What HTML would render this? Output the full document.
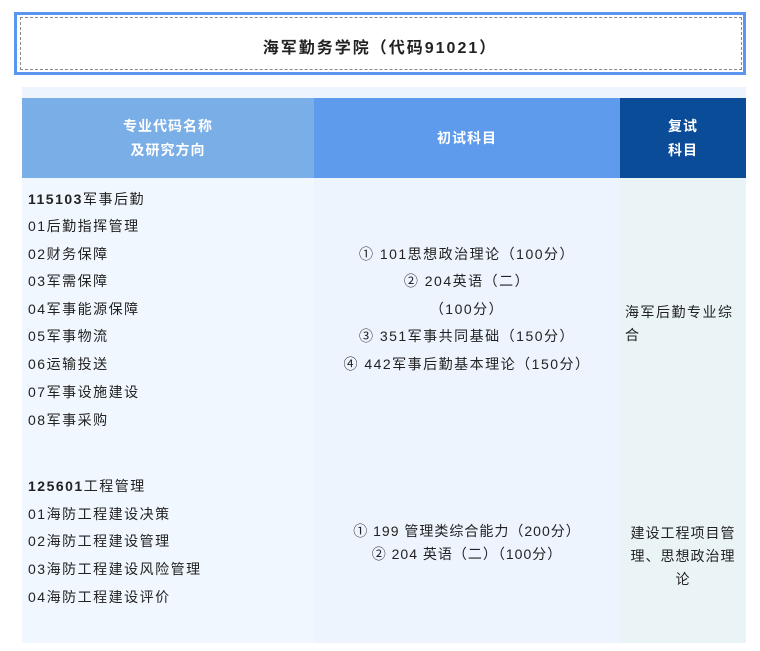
<!DOCTYPE html>
<html><head><meta charset="utf-8"><style>
body{margin:0;width:760px;height:651px;background:#fff;font-family:"Liberation Sans","Noto Sans CJK SC",sans-serif;position:relative;overflow:hidden}
.a{position:absolute}
.t{position:absolute;font-size:14px;letter-spacing:1.5px;color:#222;white-space:nowrap;line-height:18px}
.c{text-align:center}
.h{color:#fff;font-weight:bold;font-size:14px;letter-spacing:1px;text-align:center;line-height:24px}
</style></head><body>
<div class="a" style="left:14px;top:12px;width:726px;height:57px;border:3px solid #5b95ef"></div>
<div class="a" style="left:20px;top:17px;width:720px;height:51px;border:1px dashed #888"></div>
<div class="a" style="left:14px;top:34px;width:732px;text-align:center;font-size:16px;font-weight:bold;color:#222;letter-spacing:2px">海军勤务学院（代码91021）</div>
<div class="a" style="left:22px;top:87px;width:724px;height:11px;background:#edf4fd"></div>
<div class="a" style="left:22px;top:98px;width:292px;height:80px;background:#7aaee6"></div>
<div class="a" style="left:314px;top:98px;width:306px;height:80px;background:#5e9bed"></div>
<div class="a" style="left:620px;top:98px;width:126px;height:80px;background:#0b4c99"></div>
<div class="a" style="left:22px;top:178px;width:292px;height:465px;background:#f0f7fe"></div>
<div class="a" style="left:314px;top:178px;width:306px;height:465px;background:#edf4fd"></div>
<div class="a" style="left:620px;top:178px;width:126px;height:465px;background:#eaf4f6"></div>
<div class="a h" style="left:22px;top:114px;width:292px">专业代码名称<br>及研究方向</div>
<div class="a h" style="left:314px;top:126px;width:306px">初试科目</div>
<div class="a h" style="left:620px;top:114px;width:126px">复试<br>科目</div>

<div class="t" style="left:28px;top:190px"><b>115103</b>军事后勤</div>
<div class="t" style="left:28px;top:217px">01后勤指挥管理</div>
<div class="t" style="left:28px;top:245px">02财务保障</div>
<div class="t" style="left:28px;top:272px">03军需保障</div>
<div class="t" style="left:28px;top:300px">04军事能源保障</div>
<div class="t" style="left:28px;top:327px">05军事物流</div>
<div class="t" style="left:28px;top:355px">06运输投送</div>
<div class="t" style="left:28px;top:383px">07军事设施建设</div>
<div class="t" style="left:28px;top:411px">08军事采购</div>
<div class="t" style="left:28px;top:477px"><b>125601</b>工程管理</div>
<div class="t" style="left:28px;top:505px">01海防工程建设决策</div>
<div class="t" style="left:28px;top:532px">02海防工程建设管理</div>
<div class="t" style="left:28px;top:560px">03海防工程建设风险管理</div>
<div class="t" style="left:28px;top:588px">04海防工程建设评价</div>

<div class="t c" style="left:314px;top:245px;width:306px">① 101思想政治理论（100分）</div>
<div class="t c" style="left:314px;top:272px;width:306px">② 204英语（二）</div>
<div class="t c" style="left:314px;top:300px;width:306px">（100分）</div>
<div class="t c" style="left:314px;top:327px;width:306px">③ 351军事共同基础（150分）</div>
<div class="t c" style="left:314px;top:355px;width:306px">④ 442军事后勤基本理论（150分）</div>
<div class="t c" style="left:314px;top:522px;width:306px;letter-spacing:1px">① 199 管理类综合能力（200分）</div>
<div class="t c" style="left:314px;top:545px;width:306px;letter-spacing:1px">② 204 英语（二）（100分）</div>

<div class="t" style="left:625px;top:301px;line-height:23px">海军后勤专业综<br>合</div>
<div class="t c" style="left:620px;top:522px;width:126px;line-height:23px;letter-spacing:1px">建设工程项目管<br>理、思想政治理<br>论</div>
</body></html>
